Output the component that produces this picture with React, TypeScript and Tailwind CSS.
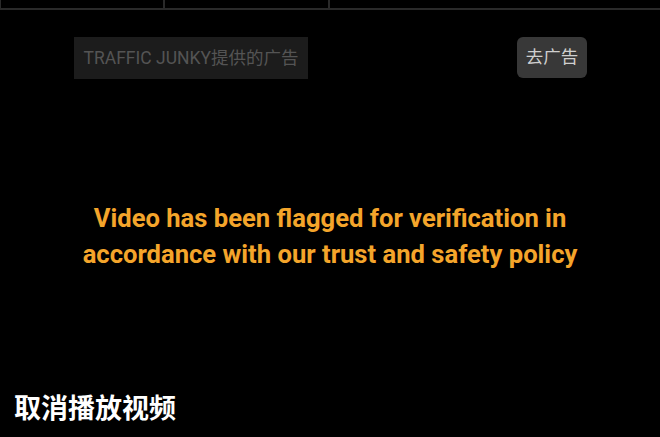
import React from "react";

export default function App() {
  return (
    <div className="w-[660px] h-[437px] bg-black flex flex-col overflow-hidden" style={{ fontFamily: "Roboto, 'Noto Sans CJK SC', sans-serif" }}>
      <div className="h-[10px] flex border-b-2 border-[#2a2a2a]">
        <div className="w-[165px] border-l border-r-2 border-[#2a2a2a]" />
        <div className="w-[165px] border-r-2 border-[#2a2a2a]" />
        <div className="flex-1" />
      </div>
      <div className="flex items-start justify-between pl-[74px] pr-[73px] pt-[27px]">
        <div className="h-[42px] w-[234px] bg-[#1c1c1c] flex items-center justify-center text-[17.5px] text-[#545454]">
          TRAFFIC JUNKY提供的广告
        </div>
        <div className="h-[41px] w-[70px] rounded-[6px] bg-[#383838] flex items-center justify-center text-[17.5px] text-[#cfcfcf]">
          去广告
        </div>
      </div>
      <div className="flex-1 flex flex-col items-center justify-center pt-[10px]">
        <div className="text-center text-[25.6px] font-bold leading-[36px] text-[#f4a52b]">
          Video has been flagged for verification in
          <br />
          accordance with our trust and safety policy
        </div>
      </div>
      <div className="h-[55px] pl-[14px] pb-[0px] flex items-center text-[27px] font-bold text-white">
        取消播放视频
      </div>
    </div>
  );
}
